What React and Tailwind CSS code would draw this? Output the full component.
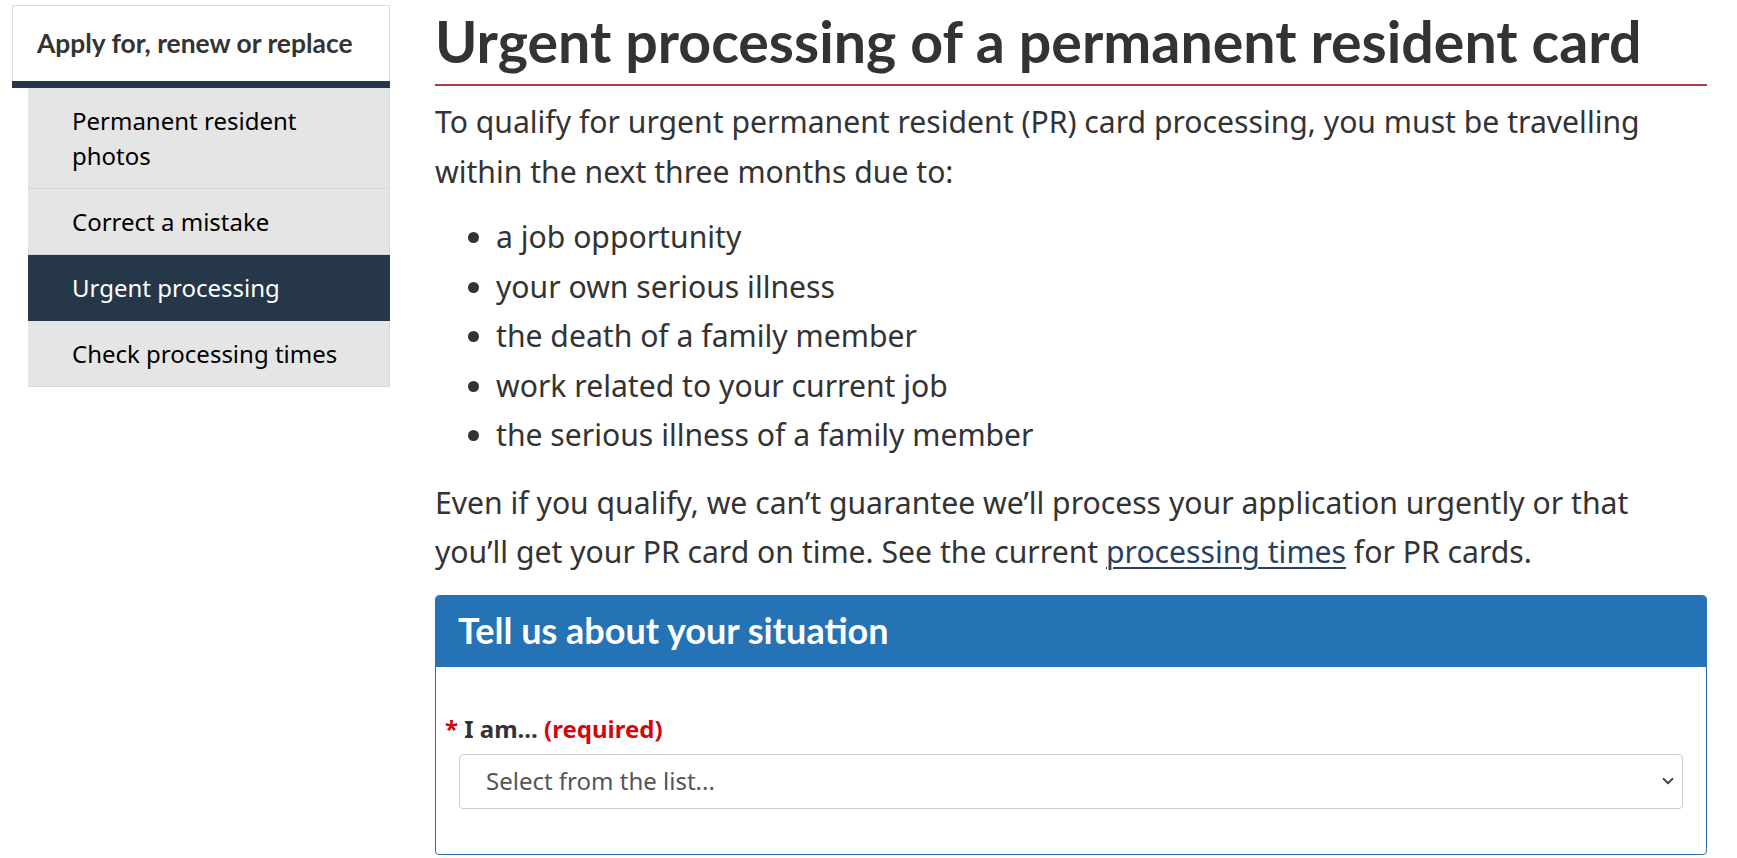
import { ChevronDown } from 'lucide-react';

// Sidebar entries; the active one gets the dark navy background
const MENU = [
  { label: 'Permanent resident photos', active: false },
  { label: 'Correct a mistake', active: false },
  { label: 'Urgent processing', active: true },
  { label: 'Check processing times', active: false },
];

const REASONS = [
  'a job opportunity',
  'your own serious illness',
  'the death of a family member',
  'work related to your current job',
  'the serious illness of a family member',
];

function Sidebar() {
  return (
    <aside className="ml-[12px] w-[378px] shrink-0 pt-[5px]">
      {/* ── Section heading ── */}
      <div className="flex h-[76px] items-center border border-b-0 border-[#ddd] pl-[24px]">
        <span className="font-['Lato',sans-serif] text-[26.4px] font-bold text-[#333]">
          Apply for, renew or replace
        </span>
      </div>
      <div className="h-[7px] bg-[#26374a]" />

      {/* ── Sub pages ── */}
      <ul className="ml-[16px]">
        {MENU.map(({ label, active }) => (
          <li
            key={label}
            className={
              active
                ? 'border-b border-[#26374a] bg-[#26374a] py-[15px] pl-[44px] pr-[20px] text-[24px] leading-[35px] text-white'
                : label.startsWith('Permanent')
                  ? 'border-b border-r border-[#d8d8d8] bg-[#e5e5e5] py-[15px] pl-[44px] pr-[60px] text-[24px] leading-[35px] text-black'
                  : 'border-b border-r border-[#d8d8d8] bg-[#e5e5e5] py-[15px] pl-[44px] pr-[10px] text-[24px] leading-[35px] text-black'
            }
          >
            {label}
          </li>
        ))}
      </ul>
    </aside>
  );
}

export default function App() {
  return (
    <div className="flex h-[858px] w-[1737px] overflow-hidden bg-white font-['Noto_Sans',sans-serif] text-[#333]">
      <Sidebar />

      {/* ── Main column ── */}
      <main className="ml-[45px] w-[1272px] shrink-0">
        <h1 className="mt-[9px] border-b-2 border-[#af3c43] pb-[12px] font-['Lato',sans-serif] text-[57.3px] font-bold leading-[1.1] text-[#333]">
          Urgent processing of a permanent resident card
        </h1>

        <p className="mb-[16px] mt-[11px] max-w-[1230px] text-[30.15px] leading-[49.5px]">
          To qualify for urgent permanent resident (PR) card processing, you must be travelling within the next three months due to:
        </p>

        <ul className="mb-[18px] list-disc pl-[61px] text-[30.15px] leading-[49.5px]">
          {REASONS.map((r) => (
            <li key={r}>{r}</li>
          ))}
        </ul>

        <p className="max-w-[1230px] text-[30.15px] leading-[49.5px]">
          Even if you qualify, we can’t guarantee we’ll process your application urgently or that you’ll get your PR card on time. See the current{' '}
          <a href="#" className="text-[#284162] underline decoration-[2px] underline-offset-[4px]">
            processing times
          </a>{' '}
          for PR cards.
        </p>

        {/* ── Situation panel ── */}
        <section className="mt-[18px] overflow-hidden rounded-[4px] border border-[#2572b4]">
          <div className="flex h-[71px] items-center bg-[#2572b4] pl-[22px]">
            <h2 className="font-['Lato',sans-serif] text-[36px] font-bold leading-[1.1] text-white">
              Tell us about your situation
            </h2>
          </div>
          <div className="pb-[45px] pt-[45px]">
            <label className="block pl-[9px] text-[24px] font-bold leading-[34px] text-[#333]">
              <span className="text-[#d3080c]">*</span> I am...{' '}
              <span className="text-[#d3080c]">(required)</span>
            </label>
            <div className="relative mx-[23px] mt-[8px]">
              <select className="h-[55px] w-full appearance-none rounded-[4px] border border-[#ccc] bg-white pl-[26px] text-[24px] text-[#555]">
                <option>Select from the list...</option>
              </select>
              <ChevronDown
                size={18}
                strokeWidth={2.5}
                className="pointer-events-none absolute right-[6px] top-1/2 -translate-y-1/2 text-[#444]"
              />
            </div>
          </div>
        </section>
      </main>
    </div>
  );
}
